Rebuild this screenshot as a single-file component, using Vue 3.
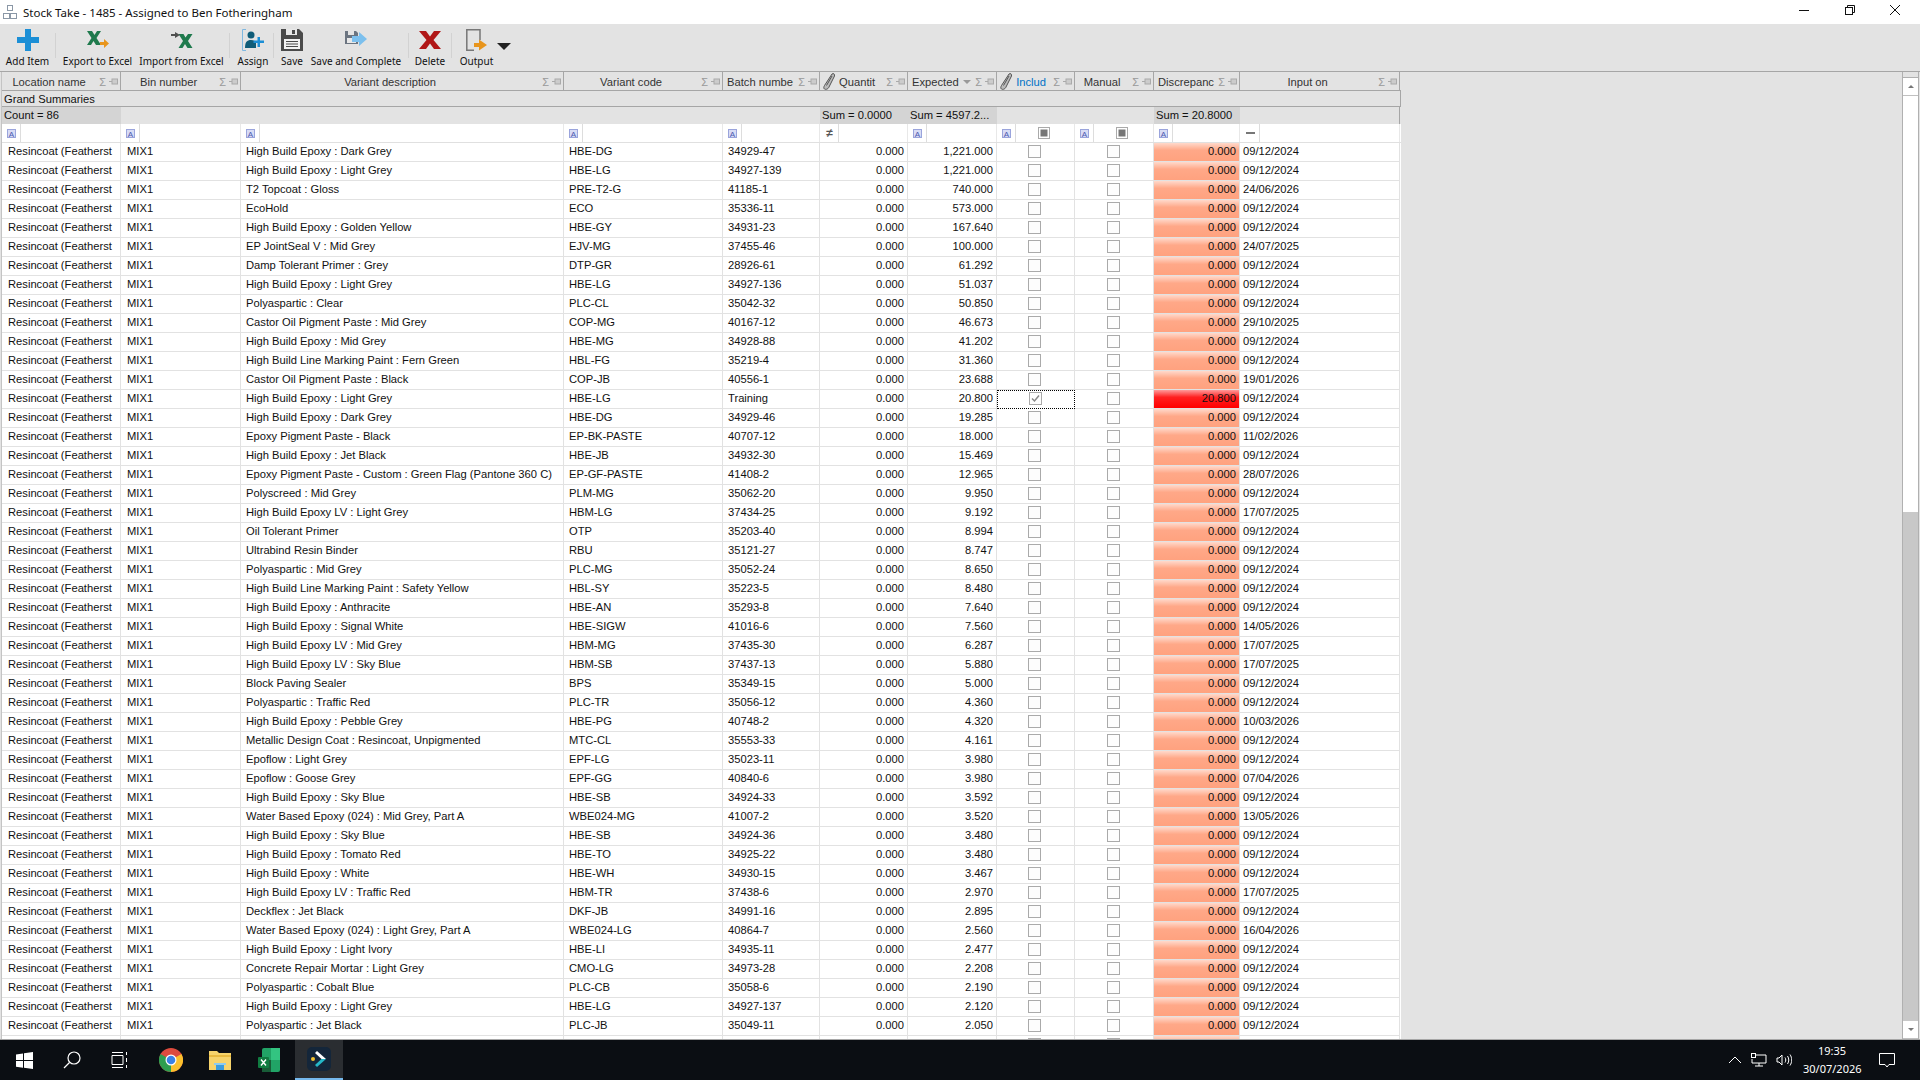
<script setup>
const tools = [
  { label: 'Add Item', icon: 'add', w: 55 },
  { label: 'Export to Excel', icon: 'export', w: 83, sep: true },
  { label: 'Import from Excel', icon: 'import', w: 90, pr: 5 },
  { label: 'Assign', icon: 'assign', w: 43, pl: 3, sep: true },
  { label: 'Save', icon: 'save', w: 36, sep: true },
  { label: 'Save and Complete', icon: 'complete', w: 98, pr: 6 },
  { label: 'Delete', icon: 'delete', w: 42, sep: true },
  { label: 'Output', icon: 'output', w: 45, pl: 4, sep: true }
]

const headers = [
  { text: 'Location name' },
  { text: 'Bin number' },
  { text: 'Variant description' },
  { text: 'Variant code' },
  { text: 'Batch numbe', left: true },
  { text: 'Quantit', pencil: true },
  { text: 'Expected', left: true, sort: true },
  { text: 'Includ', pencil: true, blue: true },
  { text: 'Manual' },
  { text: 'Discrepanc', left: true },
  { text: 'Input on' }
]

const summaries = ['Count = 86', '', '', '', '', 'Sum = 0.0000', 'Sum = 4597.2...', '', '', 'Sum = 20.8000', '']

// description | code | batch | expected | input on
const raw = `High Build Epoxy : Dark Grey|HBE-DG|34929-47|1,221.000|09/12/2024
High Build Epoxy : Light Grey|HBE-LG|34927-139|1,221.000|09/12/2024
T2 Topcoat : Gloss|PRE-T2-G|41185-1|740.000|24/06/2026
EcoHold|ECO|35336-11|573.000|09/12/2024
High Build Epoxy : Golden Yellow|HBE-GY|34931-23|167.640|09/12/2024
EP JointSeal V : Mid Grey|EJV-MG|37455-46|100.000|24/07/2025
Damp Tolerant Primer : Grey|DTP-GR|28926-61|61.292|09/12/2024
High Build Epoxy : Light Grey|HBE-LG|34927-136|51.037|09/12/2024
Polyaspartic : Clear|PLC-CL|35042-32|50.850|09/12/2024
Castor Oil Pigment Paste : Mid Grey|COP-MG|40167-12|46.673|29/10/2025
High Build Epoxy : Mid Grey|HBE-MG|34928-88|41.202|09/12/2024
High Build Line Marking Paint : Fern Green|HBL-FG|35219-4|31.360|09/12/2024
Castor Oil Pigment Paste : Black|COP-JB|40556-1|23.688|19/01/2026
High Build Epoxy : Light Grey|HBE-LG|Training|20.800|09/12/2024
High Build Epoxy : Dark Grey|HBE-DG|34929-46|19.285|09/12/2024
Epoxy Pigment Paste - Black|EP-BK-PASTE|40707-12|18.000|11/02/2026
High Build Epoxy : Jet Black|HBE-JB|34932-30|15.469|09/12/2024
Epoxy Pigment Paste - Custom : Green Flag (Pantone 360 C)|EP-GF-PASTE|41408-2|12.965|28/07/2026
Polyscreed : Mid Grey|PLM-MG|35062-20|9.950|09/12/2024
High Build Epoxy LV : Light Grey|HBM-LG|37434-25|9.192|17/07/2025
Oil Tolerant Primer|OTP|35203-40|8.994|09/12/2024
Ultrabind Resin Binder|RBU|35121-27|8.747|09/12/2024
Polyaspartic : Mid Grey|PLC-MG|35052-24|8.650|09/12/2024
High Build Line Marking Paint : Safety Yellow|HBL-SY|35223-5|8.480|09/12/2024
High Build Epoxy : Anthracite|HBE-AN|35293-8|7.640|09/12/2024
High Build Epoxy : Signal White|HBE-SIGW|41016-6|7.560|14/05/2026
High Build Epoxy LV : Mid Grey|HBM-MG|37435-30|6.287|17/07/2025
High Build Epoxy LV : Sky Blue|HBM-SB|37437-13|5.880|17/07/2025
Block Paving Sealer|BPS|35349-15|5.000|09/12/2024
Polyaspartic : Traffic Red|PLC-TR|35056-12|4.360|09/12/2024
High Build Epoxy : Pebble Grey|HBE-PG|40748-2|4.320|10/03/2026
Metallic Design Coat : Resincoat, Unpigmented|MTC-CL|35553-33|4.161|09/12/2024
Epoflow : Light Grey|EPF-LG|35023-11|3.980|09/12/2024
Epoflow : Goose Grey|EPF-GG|40840-6|3.980|07/04/2026
High Build Epoxy : Sky Blue|HBE-SB|34924-33|3.592|09/12/2024
Water Based Epoxy (024) : Mid Grey, Part A|WBE024-MG|41007-2|3.520|13/05/2026
High Build Epoxy : Sky Blue|HBE-SB|34924-36|3.480|09/12/2024
High Build Epoxy : Tomato Red|HBE-TO|34925-22|3.480|09/12/2024
High Build Epoxy : White|HBE-WH|34930-15|3.467|09/12/2024
High Build Epoxy LV : Traffic Red|HBM-TR|37438-6|2.970|17/07/2025
Deckflex : Jet Black|DKF-JB|34991-16|2.895|09/12/2024
Water Based Epoxy (024) : Light Grey, Part A|WBE024-LG|40864-7|2.560|16/04/2026
High Build Epoxy : Light Ivory|HBE-LI|34935-11|2.477|09/12/2024
Concrete Repair Mortar : Light Grey|CMO-LG|34973-28|2.208|09/12/2024
Polyaspartic : Cobalt Blue|PLC-CB|35058-6|2.190|09/12/2024
High Build Epoxy : Light Grey|HBE-LG|34927-137|2.120|09/12/2024
Polyaspartic : Jet Black|PLC-JB|35049-11|2.050|09/12/2024`

const rows = raw.split('\n').map(line => {
  const [desc, code, batch, expected, date] = line.split('|')
  return { desc, code, batch, expected, date, counted: batch === 'Training' }
})
</script>

<template>
  <div class="window">
    <div class="titlebar">
      <svg class="app-icon" width="16" height="16" viewBox="0 0 16 16" fill="none" stroke="#8a97a6">
        <rect x="5.5" y="1.5" width="5" height="5" />
        <rect x="1.5" y="9.5" width="6" height="5" />
        <rect x="8.5" y="9.5" width="6" height="5" />
      </svg>
      <span class="title">Stock Take - 1485  - Assigned to Ben Fotheringham</span>
      <div class="win-buttons">
        <svg width="10" height="10" viewBox="0 0 10 10"><path d="M0 5.500h10" stroke="#111" /></svg>
        <svg width="10" height="10" viewBox="0 0 10 10" fill="none" stroke="#111"><path d="M2.500 2.500V.5h7v7h-2" /><rect x=".5" y="2.500" width="7" height="7" /></svg>
        <svg width="10" height="10" viewBox="0 0 10 10"><path d="M0 0l10 10M10 0L0 10" stroke="#111" /></svg>
      </div>
    </div>

    <div class="toolbar">
      <template v-for="t in tools" :key="t.label">
        <i v-if="t.sep" class="tool-sep"></i>
        <div class="tool" :style="{ width: t.w + 'px', paddingLeft: (t.pl || 0) + 'px', paddingRight: (t.pr || 0) + 'px' }">
          <div class="tool-icon">
            <svg v-if="t.icon === 'add'" width="22" height="22" viewBox="0 0 22 22"><path d="M8 0h6v8h8v6h-8v8H8v-8H0V8h8z" fill="#1c8fd6" /></svg>
            <svg v-else-if="t.icon === 'export'" width="22" height="18" viewBox="0 0 22 18">
              <path d="M0 0h5l2.500 4L10 0h4L9.500 7 14 14H9L6.500 10 4 14H0l4.500-7z" fill="#1f7a4d" />
              <path d="M13 11h4V8l5 4.500L17 17v-3h-4z" fill="#e8951c" />
            </svg>
            <svg v-else-if="t.icon === 'import'" width="22" height="16" viewBox="0 0 22 16">
              <path d="M7.500 2h5l2 3.500L17 2h4.500L17 9l4.500 7h-5L14 12l-2.500 4H7.500L12 9z" fill="#1f7a4d" />
              <path d="M0 2h4V0l5 3-5 3V4H0z" fill="#505050" />
            </svg>
            <svg v-else-if="t.icon === 'assign'" width="22" height="22" viewBox="0 0 22 22">
              <path d="M4 .5H.5v21H4" fill="none" stroke="#7fb8e0" />
              <circle cx="9" cy="6" r="3.500" fill="#0f5c78" />
              <path d="M3 19c0-6 2-8 6-8 3 0 4 1 5 3v5z" fill="#0f5c78" />
              <path d="M15.500 8h2.500v3.500h4V14h-4v4h-2.500v-4h-4v-2.500h4z" fill="#1c8fd6" />
            </svg>
            <svg v-else-if="t.icon === 'save'" width="22" height="22" viewBox="0 0 22 22">
              <path d="M0 0h18l4 4v18H0z" fill="#4a4a4a" />
              <rect x="5" y="0" width="11" height="6" fill="#e8e8e8" />
              <rect x="11" y="1" width="3" height="4" fill="#4a4a4a" />
              <rect x="3" y="10" width="16" height="10" fill="#f2f2f2" />
              <path d="M5 12.500h12M5 15h12M5 17.500h12" stroke="#4a4a4a" />
            </svg>
            <svg v-else-if="t.icon === 'complete'" width="22" height="17" viewBox="0 0 22 17">
              <path d="M0 0h11l2 2v11H0z" fill="#6b7480" />
              <rect x="3" y="0" width="6" height="4" fill="#e4e4e4" />
              <rect x="2" y="7" width="9" height="5" fill="#e8e8e8" />
              <path d="M7 5h7V1l8 7-8 7v-4H7z" fill="#7cc0ee" />
            </svg>
            <svg v-else-if="t.icon === 'delete'" width="22" height="18" viewBox="0 0 22 18"><path d="M0 0h7l4 5.500L15 0h7l-7.500 9L22 18h-7l-4-5.500L7 18H0l7.500-9z" fill="#b01717" /></svg>
            <svg v-else width="21" height="22" viewBox="0 0 21 22">
              <path d="M14 11V.8H.8v20.400H8" fill="none" stroke="#777" stroke-width="1.500" />
              <path d="M8 14h5v-3.500l8 5.500-8 5.500V18H8z" fill="#e8951c" />
            </svg>
          </div>
          <span class="tool-label">{{ t.label }}</span>
        </div>
      </template>
      <i class="dropdown"></i>
    </div>

    <div class="content">
      <div class="grid">
        <div class="row head">
          <div v-for="h in headers" :key="h.text" class="hcell">
            <svg v-if="h.pencil" class="pencil" width="12" height="17" viewBox="0 0 12 17"><path d="M9 1c1.500-1 3 0 2.500 2L6 14c-1 2.500-4 3-5 1.500-.5-1 0-2 .5-3z" fill="#bbb" stroke="#555" /><path d="M3.500 12.500L9 3" stroke="#555" /></svg>
            <span class="htext" :class="{ left: h.left, blue: h.blue }">{{ h.text }}</span>
            <i v-if="h.sort" class="sort"></i>
            <span class="sigma">Σ</span>
            <svg class="pin" width="9" height="7" viewBox="0 0 9 7"><path d="M0 3.500h3" stroke="#aaa" /><rect x="3" y="1" width="5.500" height="5" fill="#ccc" stroke="#aaa" /></svg>
          </div>
        </div>
        <div class="grand">Grand Summaries</div>
        <div class="row summary">
          <div v-for="(s, i) in summaries" :key="i" class="scell" :class="{ filled: s }">{{ s }}</div>
        </div>
        <div class="row filter">
          <div v-for="(h, i) in headers" :key="h.text" class="fcell">
            <span v-if="i === 5" class="op">≠</span>
            <span v-else-if="i === 10" class="op dash"></span>
            <span v-else class="abox">A</span>
            <i class="fsep"></i>
            <span v-if="i === 7 || i === 8" class="fcheck"></span>
          </div>
        </div>
        <div v-for="(r, i) in rows" :key="i" class="row body">
          <div class="cell loc">Resincoat (Featherst</div>
          <div class="cell bin">MIX1</div>
          <div class="cell">{{ r.desc }}</div>
          <div class="cell">{{ r.code }}</div>
          <div class="cell">{{ r.batch }}</div>
          <div class="cell num">0.000</div>
          <div class="cell num">{{ r.expected }}</div>
          <div class="cell mid" :class="{ focus: r.counted }">
            <span class="check">
              <svg v-if="r.counted" width="11" height="11" viewBox="0 0 11 11"><path d="M2 5.500l2.500 2.500L9 2.500" fill="none" stroke="#888" stroke-width="1.500" /></svg>
            </span>
          </div>
          <div class="cell mid"><span class="check"></span></div>
          <div class="cell num disc" :class="{ hot: r.counted }">{{ r.counted ? '20.800' : '0.000' }}</div>
          <div class="cell date">{{ r.date }}</div>
        </div>
        <div class="row body">
          <div v-for="(h, i) in headers" :key="h.text" class="cell" :class="{ mid: i === 7 || i === 8, disc: i === 9 }">
            <span v-if="i === 7 || i === 8" class="check"></span>
          </div>
        </div>
      </div>
      <div class="scrollbar">
        <div class="sb-cap"></div>
        <div class="sb-btn"><i class="up"></i></div>
        <div class="sb-track"></div>
        <div class="sb-thumb"></div>
        <div class="sb-btn"><i class="down"></i></div>
      </div>
    </div>

    <div class="taskbar">
      <div class="task">
        <svg width="17" height="17" viewBox="0 0 17 17" fill="#fff"><path d="M0 2.400l7-1v6.700H0zM8 1.200L17 0v8.100H8zM0 9h7v6.700l-7-1zM8 9h9v8l-9-1.200z" /></svg>
      </div>
      <div class="task">
        <svg width="18" height="18" viewBox="0 0 18 18" fill="none" stroke="#fff" stroke-width="1.200"><circle cx="11" cy="7" r="6" /><path d="M6.500 11.500L1 17" /></svg>
      </div>
      <div class="task">
        <svg width="18" height="18" viewBox="0 0 18 18" fill="none" stroke="#fff"><path d="M1 4.500h11v9H1zM1 1.500h11M1 16.500h11M15.500 1v3M15.500 7v4M15.500 14v3" /></svg>
      </div>
      <div class="task app first">
        <svg width="24" height="24" viewBox="0 0 24 24">
          <circle cx="12" cy="12" r="12" fill="#dd4b3e" />
          <path d="M12 12L22.400 6A12 12 0 0 1 12 24z" fill="#fbc02d" />
          <path d="M12 12L12 24A12 12 0 0 1 1.600 6z" fill="#2e9e4f" />
          <circle cx="12" cy="12" r="5.500" fill="#fff" />
          <circle cx="12" cy="12" r="4.300" fill="#3b82e6" />
        </svg>
      </div>
      <div class="task app">
        <svg width="22" height="19" viewBox="0 0 22 19">
          <path d="M0 0h8l2 2h12v17H0z" fill="#f6d36b" />
          <path d="M0 4h22v2H0z" fill="#e8b93f" />
          <path d="M7 12h8v7H7z" fill="#3a9bdc" />
          <path d="M5 12h12v2H5z" fill="#8ccbee" />
        </svg>
      </div>
      <div class="task app">
        <svg width="22" height="24" viewBox="0 0 22 24">
          <rect x="4" y="0" width="18" height="24" rx="2" fill="#21a366" />
          <rect x="13" y="0" width="9" height="12" fill="#33c481" />
          <rect x="4" y="12" width="9" height="12" fill="#185c37" />
          <rect x="0" y="9" width="11" height="11" rx="1" fill="#107c41" />
          <path d="M3 11.500l5 6M8 11.500l-5 6" stroke="#fff" stroke-width="1.400" />
        </svg>
      </div>
      <div class="task app active">
        <svg width="24" height="24" viewBox="0 0 24 24">
          <rect width="24" height="24" rx="5" fill="#14263a" />
          <path d="M10 4l9 8h-4.500L8 6z" fill="#fff" />
          <path d="M19 12l-9 8-2-2 6.500-6z" fill="#25b8c8" />
          <circle cx="6" cy="12" r="2" fill="#f2c230" />
        </svg>
      </div>
      <div class="tray">
        <svg width="14" height="8" viewBox="0 0 14 8" fill="none" stroke="#fff"><path d="M1 7l6-6 6 6" /></svg>
        <svg width="16" height="14" viewBox="0 0 16 14" fill="none" stroke="#fff"><path d="M4 2h11v8H1V6M8 10v3M4 13h8" /><rect x=".5" y=".5" width="4" height="4" /></svg>
        <svg width="16" height="14" viewBox="0 0 16 14" fill="none" stroke="#fff"><path d="M1 5h2l3-3v10L3 9H1zM9 4.500c1 1.500 1 3.500 0 5M11.500 3c1.700 2.500 1.700 5.500 0 8M14 1.500c2.300 3.500 2.300 7.500 0 11" /></svg>
        <div class="clock"><div>19:35</div><div>30/07/2026</div></div>
        <svg class="notify" width="16" height="15" viewBox="0 0 16 15" fill="none" stroke="#fff"><path d="M.5.500h15v11H10L8 14l-2-2.500H.5z" /></svg>
      </div>
    </div>
  </div>
</template>

<style scoped>
.window {
  width: 1920px;
  height: 1080px;
  display: flex;
  flex-direction: column;
  overflow: hidden;
  background: #e3e3e3;
  color: #111;
  font-family: "Liberation Sans", Arial, sans-serif;
  font-size: 11.2px;
}

.titlebar {
  height: 24px;
  flex: none;
  background: #fff;
  display: flex;
  align-items: center;
  padding-left: 2px;
}
.app-icon { margin-right: 5px; }
.title {
  font-family: "Noto Sans", sans-serif;
  font-size: 11.5px;
  white-space: pre;
}
.win-buttons {
  margin-left: auto;
  display: flex;
  align-items: center;
  gap: 35.5px;
  padding: 0 20px 4px 0;
}

.toolbar {
  height: 48px;
  flex: none;
  display: flex;
  align-items: stretch;
  padding-top: 1px;
  border-bottom: 1px solid #a6a6a6;
  box-sizing: border-box;
}
.tool {
  display: flex;
  flex-direction: column;
  align-items: center;
  flex: none;
  box-sizing: border-box;
}
.tool-icon {
  height: 29px;
  display: flex;
  align-items: center;
  justify-content: center;
}
.tool-label {
  font-family: "Noto Sans", sans-serif;
  font-size: 10px;
  line-height: 15px;
  white-space: nowrap;
}
.tool-sep {
  width: 1px;
  height: 25px;
  margin-top: 8px;
  background: #d2d2d2;
  flex: none;
}
.dropdown {
  width: 0;
  height: 0;
  margin-top: 18px;
  border-left: 7px solid transparent;
  border-right: 7px solid transparent;
  border-top: 7px solid #222;
}

.content {
  flex: 1;
  min-height: 0;
  display: flex;
  justify-content: space-between;
  padding-left: 1px;
  border-bottom: 1px solid #a6a6a6;
  overflow: hidden;
}
.grid {
  width: 1400px;
  flex: none;
  border-left: 1px solid #c4c4c4;
  box-sizing: border-box;
}
.row {
  display: grid;
  grid-template-columns: 119px 120px 323px 159px 97px 88px 89px 78px 79px 86px 160px;
}

.head { height: 19px; border-bottom: 1px solid #a6a6a6; box-sizing: border-box; }
.hcell {
  display: flex;
  align-items: center;
  padding: 1px 2px 0 4px;
  border-right: 1px solid #a6a6a6;
  min-width: 0;
  color: #333;
}
.htext { flex: 1; text-align: center; white-space: nowrap; overflow: hidden; padding-right: 4px; }
.htext.left { text-align: left; padding-right: 0; }
.htext.blue { color: #0072c6; padding-right: 0; }
.pencil { margin-left: -1px; flex: none; }
.sigma { color: #999; font-size: 11px; margin: 0 3px; }
.pin { flex: none; }
.sort {
  width: 0;
  height: 0;
  margin-right: 1px;
  border-left: 4px solid transparent;
  border-right: 4px solid transparent;
  border-top: 4px solid #999;
}

.grand {
  height: 16px;
  line-height: 16px;
  padding-left: 2px;
  border-bottom: 1px solid #a6a6a6;
  box-sizing: border-box;
  border-right: 1px solid #a6a6a6;
}

.summary { height: 17px; }
.scell {
  line-height: 16px;
  padding-left: 2px;
  white-space: nowrap;
  overflow: hidden;
}
.scell:last-child { border-right: 1px solid #a6a6a6; }
.scell.filled { background: #d4d4d4; }

.filter { height: 19px; background: #fff; border-bottom: 1px solid #e0e0e0; box-sizing: border-box; }
.fcell {
  position: relative;
  display: flex;
  align-items: center;
  border-right: 1px solid #e8e8e8;
}
.abox {
  width: 9px;
  height: 9px;
  margin-left: 5px;
  font-size: 8px;
  line-height: 9px;
  text-align: center;
  color: #4a5ab0;
  background: #d8dcf5;
  border: 1px solid #9aa4dc;
  box-sizing: border-box;
  overflow: hidden;
}
.op { width: 9px; margin-left: 5px; font-size: 12px; font-weight: 700; color: #555; text-align: center; }
.op.dash { height: 2px; margin-left: 6px; background: #777; }
.fsep { width: 1px; height: 100%; margin-left: 4px; background: #ddd; }
.fcheck {
  position: absolute;
  left: 50%;
  top: 3px;
  width: 12px;
  height: 12px;
  margin-left: 2px;
  border: 1px solid #aaa;
  box-sizing: border-box;
  background: #777;
  box-shadow: inset 0 0 0 1.500px #fff;
}

.body { height: 19px; background: #fff; }
.cell {
  line-height: 17px;
  padding: 0 2px 0 5px;
  border-right: 1px solid #e2e2e2;
  border-bottom: 1px solid #e2e2e2;
  box-sizing: border-box;
  white-space: nowrap;
  overflow: hidden;
  height: 19px;
}
.loc { padding-left: 6px; }
.bin { padding-left: 6px; }
.num { text-align: right; padding-right: 3px; }
.mid { display: flex; align-items: flex-start; justify-content: center; padding: 2px 2px 0 0; }
.check {
  width: 13px;
  height: 13px;
  border: 1px solid #aaa;
  box-sizing: border-box;
  background: #fdfdfd;
  display: flex;
  align-items: center;
  justify-content: center;
}
.focus { border: 1px dotted #000; padding-top: 1px; }
.disc {
  background: linear-gradient(#ffd9cb, #ffa888 40%, #ffa27f);
}
.hot {
  background: linear-gradient(#ff9a9a, #ff2020 40%, #ff0000);
}
.date { padding-left: 3px; }

.scrollbar {
  width: 15px;
  margin-right: 1px;
  flex: none;
  display: flex;
  flex-direction: column;
  border-left: 1px solid #b0b0b0;
  border-right: 1px solid #b0b0b0;
}
.sb-cap { height: 5px; background: #e3e3e3; border-bottom: 1px solid #b0b0b0; }
.sb-btn {
  height: 17px;
  flex: none;
  background: #fff;
  border-bottom: 1px solid #c0c0c0;
  display: flex;
  align-items: center;
  justify-content: center;
}
.sb-track { height: 416px; background: #fff; }
.sb-thumb { flex: 1; background: #c8c8c8; }
.up, .down {
  width: 0;
  height: 0;
  border-left: 3px solid transparent;
  border-right: 3px solid transparent;
}
.up { border-bottom: 3px solid #777; }
.down { border-top: 3px solid #777; }

.taskbar {
  height: 40px;
  flex: none;
  background: #0b0e13;
  display: flex;
  align-items: center;
  color: #fff;
  font-family: "Noto Sans", sans-serif;
  font-size: 11px;
}
.task {
  width: 48px;
  height: 40px;
  flex: none;
  display: flex;
  align-items: center;
  justify-content: center;
  box-sizing: border-box;
}
.app { width: 49px; }
.app.first { margin-left: 2px; }
.active {
  margin-left: 2px;
  background: #2a2d31;
  border-bottom: 2px solid #76b9ed;
  width: 48px;
}
.tray {
  margin-left: auto;
  display: flex;
  align-items: center;
  gap: 9px;
  padding-right: 25px;
}
.clock { text-align: center; line-height: 18px; width: 58px; margin-left: 2px; }
.notify { margin-left: 9px; }
</style>
